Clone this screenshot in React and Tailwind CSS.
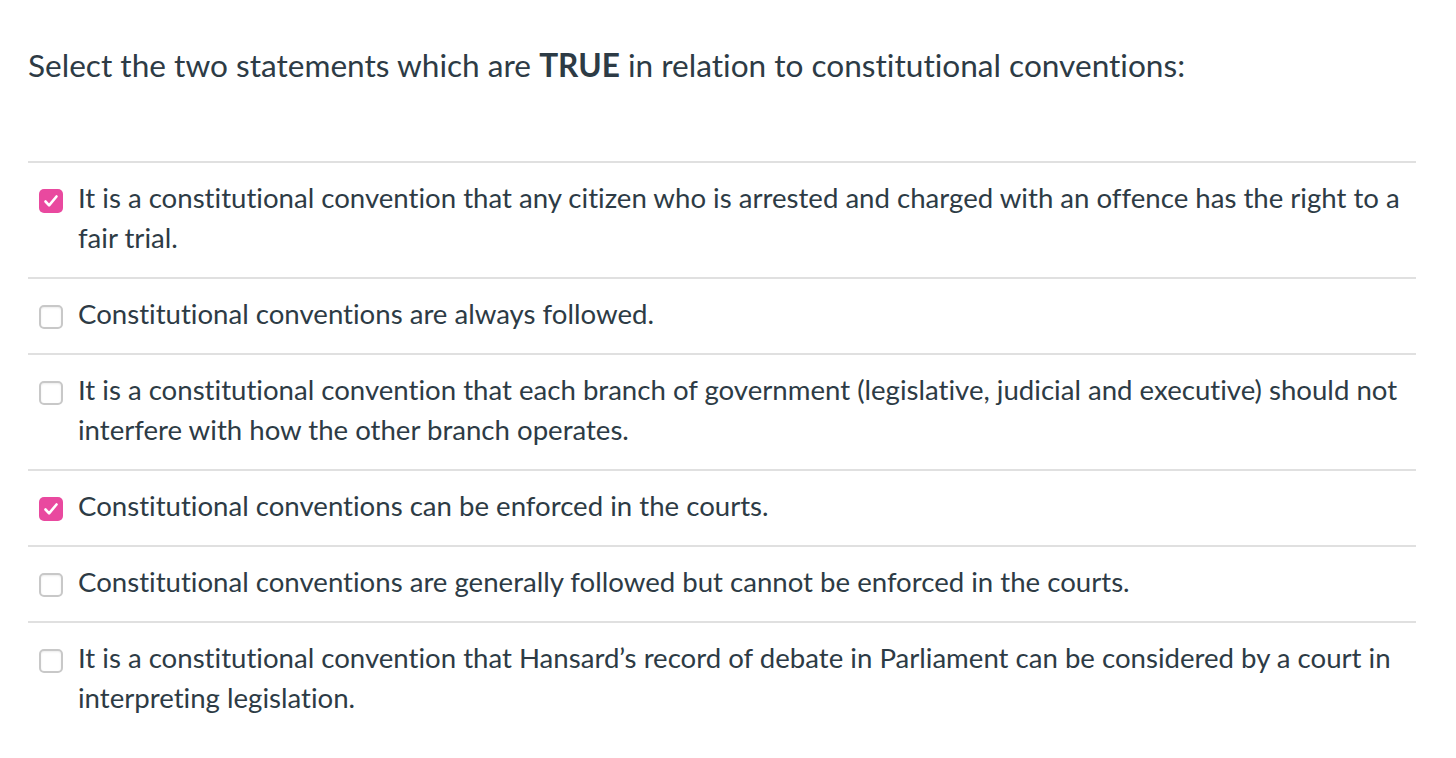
const options = [
  { text: 'It is a constitutional convention that any citizen who is arrested and charged with an offence has the right to a fair trial.', checked: true },
  { text: 'Constitutional conventions are always followed.', checked: false },
  { text: 'It is a constitutional convention that each branch of government (legislative, judicial and executive) should not interfere with how the other branch operates.', checked: false },
  { text: 'Constitutional conventions can be enforced in the courts.', checked: true },
  { text: 'Constitutional conventions are generally followed but cannot be enforced in the courts.', checked: false },
  { text: 'It is a constitutional convention that Hansard\u2019s record of debate in Parliament can be considered by a court in interpreting legislation.', checked: false },
]

function Box({ checked }) {
  if (checked) {
    return (
      <span className="w-[24px] h-[24px] rounded-[5px] bg-[#e9499f] flex items-center justify-center flex-shrink-0">
        <svg width="18" height="18" viewBox="0 0 18 18" fill="none">
          <path d="M3.5 9.5l3.6 3.8L14.5 4.5" stroke="white" strokeWidth="2.6" strokeLinecap="round" strokeLinejoin="round" />
        </svg>
      </span>
    )
  }
  return <span className="block w-[24px] h-[24px] rounded-[5px] border-2 border-[#c8c8c8] bg-white shadow-[inset_0_1px_2px_rgba(0,0,0,0.08)] flex-shrink-0" />
}

export default function App() {
  return (
    <div className="bg-white w-[1456px] h-[758px] pl-[28px] pr-[40px] pt-[43px] text-[#2d3b45] font-['Lato','Liberation_Sans',sans-serif] [font-variant-ligatures:none]">
      <h1 className="text-[31.6px] leading-[44px] m-0">
        Select the two statements which are <b className="font-bold">TRUE</b> in relation to constitutional conventions:
      </h1>
      <div className="mt-[74px]">
        {options.map((o, i) => (
          <div key={i} className="flex items-start gap-[15px] border-t-2 border-[#e0e0e0] pt-[15px] pb-[19px] pl-[11px]">
            <span className="flex mt-[11px] flex-shrink-0"><Box checked={o.checked} /></span>
            <p className="text-[27.6px] leading-[40px] m-0 flex-1">{o.text}</p>
          </div>
        ))}
      </div>
    </div>
  )
}
